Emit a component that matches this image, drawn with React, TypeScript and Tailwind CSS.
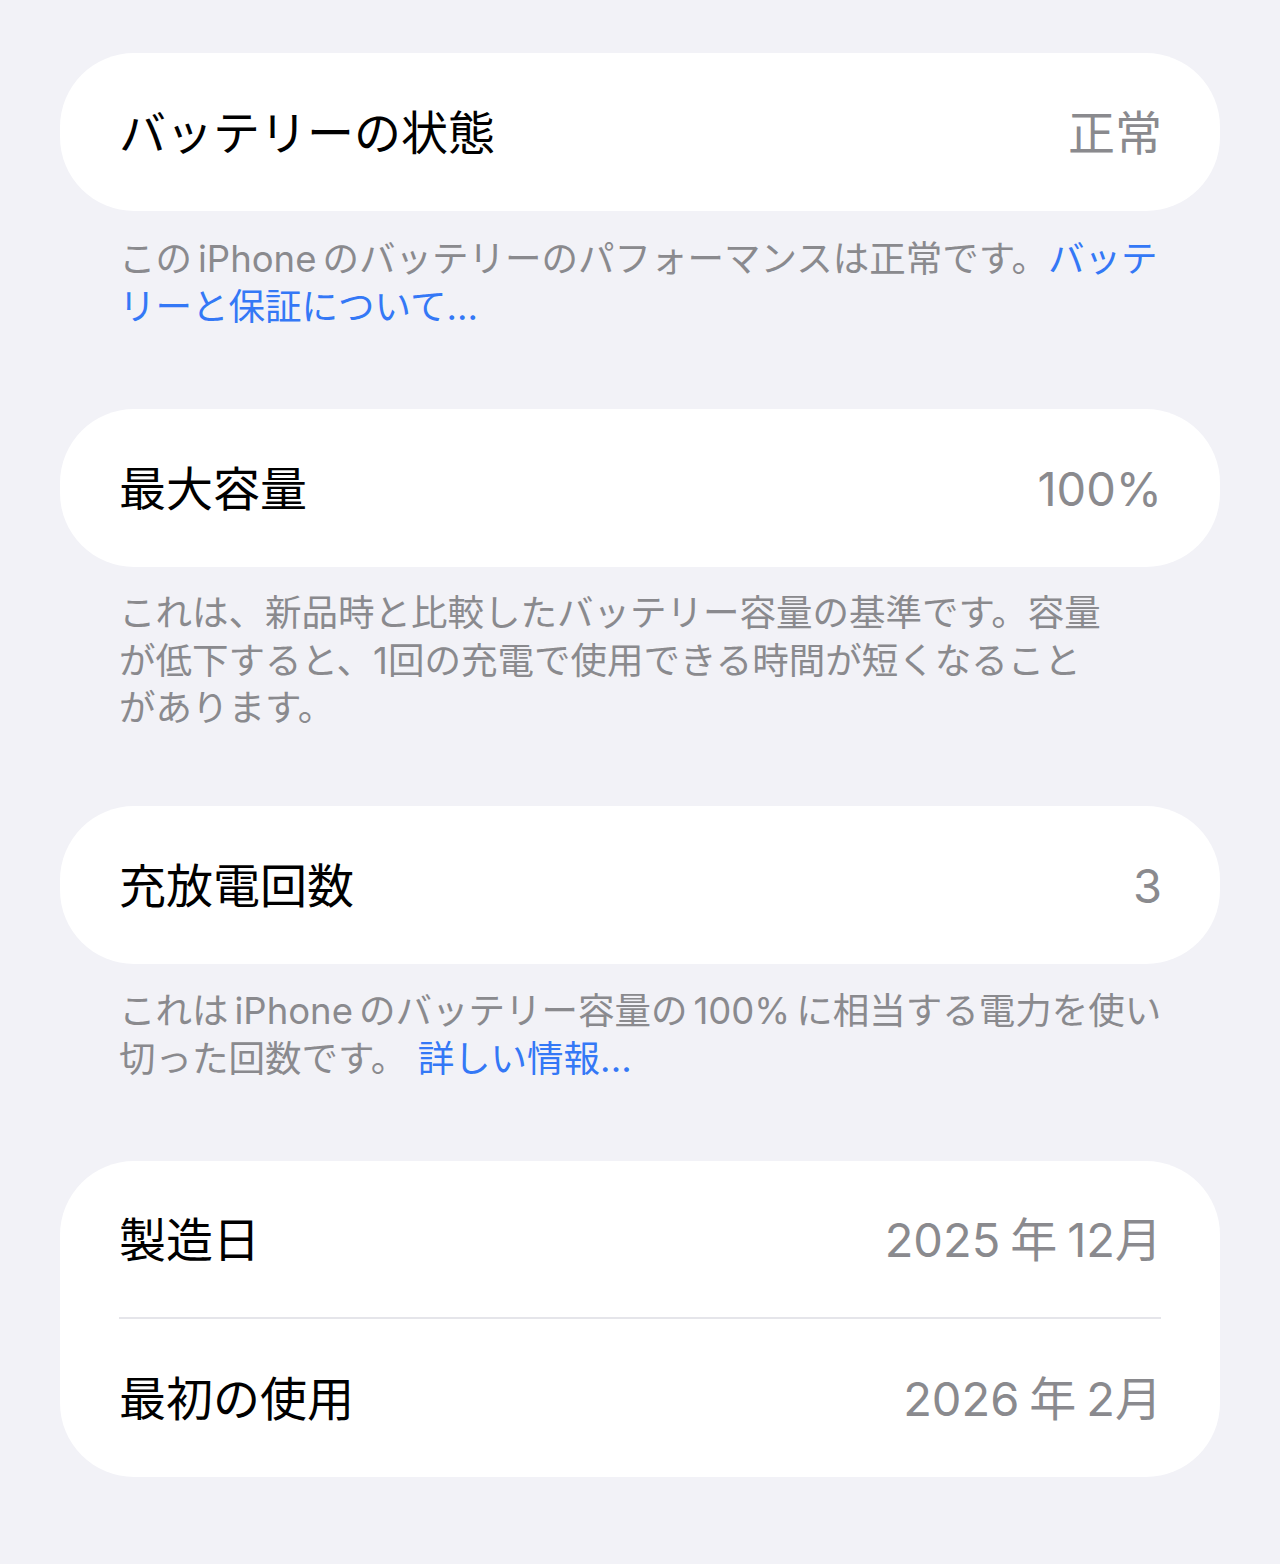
import React from "react";

const font = { fontFamily: 'Inter, "Noto Sans CJK JP", sans-serif' };

const G = ({ w = "f" }: { w?: "f" | "t" }) =>
  w === "t" ? <span className="inline-block w-[10px]" /> : <span className="inline-block w-[6px]" />;

function Row({ label, value, h = "h-[158px]" }: { label: string; value: React.ReactNode; h?: string }) {
  return (
    <div className={`flex ${h} items-center justify-between pl-[59px] pr-[58px]`}>
      <span className="text-[47px] leading-none text-black">{label}</span>
      <span className="text-[47px] leading-none text-[#8a8a8e]">{value}</span>
    </div>
  );
}

function Footer({ lines, cls }: { lines: React.ReactNode[]; cls: string }) {
  return (
    <div className={`${cls} pl-[59px] pr-[40px] text-[36.5px] leading-[47.5px] text-[#8a8a8e]`}>
      {lines.map((l, i) => (
        <div key={i} className="whitespace-nowrap">
          {l}
        </div>
      ))}
    </div>
  );
}

const Link = ({ children }: { children: React.ReactNode }) => (
  <span className="text-[#3478f6]">{children}</span>
);

export default function App() {
  return (
    <div className="min-h-[1564px] w-full bg-[#f2f2f7] px-[60px] pt-[53px]" style={font}>
      <div className="rounded-[74px] bg-white">
        <Row label="バッテリーの状態" value="正常" />
      </div>
      <Footer
        cls="mt-[25px] mb-[78px]"
        lines={[
          <>
            この<G />iPhone<G />のバッテリーのパフォーマンスは正常です。<Link>バッテ</Link>
          </>,
          <Link>リーと保証について...</Link>,
        ]}
      />

      <div className="rounded-[74px] bg-white">
        <Row label="最大容量" value="100%" />
      </div>
      <Footer
        cls="mt-[23px] mb-[73.5px]"
        lines={[
          "これは、新品時と比較したバッテリー容量の基準です。容量",
          "が低下すると、1回の充電で使用できる時間が短くなること",
          "があります。",
        ]}
      />

      <div className="rounded-[74px] bg-white">
        <Row label="充放電回数" value="3" />
      </div>
      <Footer
        cls="mt-[24px] mb-[78px]"
        lines={[
          <>
            これは<G />iPhone<G />のバッテリー容量の<G />100%<G />に相当する電力を使い
          </>,
          <>
            切った回数です。 <Link>詳しい情報...</Link>
          </>,
        ]}
      />

      <div className="rounded-[74px] bg-white">
        <Row
          label="製造日"
          h="h-[156px]"
          value={
            <>
              2025<G w="t" />年<G w="t" />12月
            </>
          }
        />
        <div className="mx-[59px] h-[2px] bg-[#e5e5ea]" />
        <Row
          label="最初の使用"
          value={
            <>
              2026<G w="t" />年<G w="t" />2月
            </>
          }
        />
      </div>
    </div>
  );
}
